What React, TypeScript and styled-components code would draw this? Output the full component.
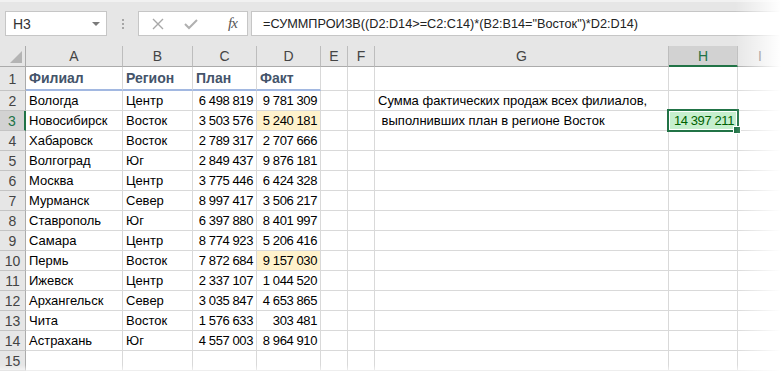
import React from "react";
import styled, { createGlobalStyle, css } from "styled-components";

const GlobalStyle = createGlobalStyle`
  html, body {
    margin: 0;
    padding: 0;
    background: #ffffff;
  }
  * {
    box-sizing: border-box;
  }
`;

const FONT = `"Liberation Sans", Arial, sans-serif`;
const GREEN = "#217346";

const Page = styled.div`
  position: relative;
  width: 783px;
  height: 379px;
  overflow: hidden;
  font-family: ${FONT};
  background: #ffffff;
`;

const FormulaBar = styled.div`
  display: flex;
  align-items: flex-start;
  height: 46px;
  padding: 11px 0 0 5px;
  background: #e6e6e6;
  border-top: 2px solid #f1f1f1;
`;

const NameBox = styled.div`
  display: flex;
  align-items: center;
  justify-content: space-between;
  width: 102px;
  height: 25px;
  margin-top: -2px;
  padding: 0 6px 0 7px;
  background: #ffffff;
  border: 1px solid #c6c6c6;
  font-size: 14px;
  color: #333333;
`;

const DropArrow = styled.span`
  width: 0;
  height: 0;
  border-left: 4px solid transparent;
  border-right: 4px solid transparent;
  border-top: 4px solid #7a7a7a;
`;

const Grip = styled.div`
  display: flex;
  flex-direction: column;
  gap: 2px;
  width: 31px;
  height: 25px;
  margin-top: -2px;
  align-items: center;
  justify-content: center;
  span {
    width: 2px;
    height: 2px;
    background: #a6a6a6;
  }
`;

const ButtonBox = styled.div`
  display: flex;
  align-items: center;
  width: 110px;
  height: 25px;
  margin-top: -2px;
  padding: 0 0 0 13px;
  background: #ffffff;
  border: 1px solid #c6c6c6;
  gap: 20px;
`;

const Fx = styled.span`
  margin-left: 10px;
  font-family: "Liberation Serif", "Times New Roman", serif;
  font-style: italic;
  font-size: 15px;
  color: #555555;
  letter-spacing: -1px;
`;

const FormulaInput = styled.div`
  flex: 1;
  height: 25px;
  margin-top: -2px;
  margin-left: 3px;
  padding: 0 0 0 11px;
  display: flex;
  align-items: center;
  background: #ffffff;
  border: 1px solid #c6c6c6;
  border-right: none;
  font-size: 12.7px;
  color: #222222;
  white-space: nowrap;
`;

const Sheet = styled.div`
  display: grid;
  grid-template-columns: 26px 97px 70px 64px 64px 27px 27px 294px 69px 1fr;
  grid-template-rows: 21px 24px repeat(14, 20px);
  font-size: 13px;
`;

const Corner = styled.div`
  position: relative;
  background: #e6e6e6;
  border-right: 1px solid #ababab;
  border-bottom: 1px solid #ababab;
  &::after {
    content: "";
    position: absolute;
    right: 3px;
    bottom: 3px;
    width: 0;
    height: 0;
    border-left: 12px solid transparent;
    border-bottom: 12px solid #b4b4b4;
  }
`;

const ColHead = styled.div<{ $active?: boolean }>`
  display: flex;
  align-items: center;
  justify-content: center;
  background: ${(p) => (p.$active ? "#d2d2d2" : "#e6e6e6")};
  color: ${(p) => (p.$active ? GREEN : "#444444")};
  border-right: 1px solid #bdbdbd;
  border-bottom: ${(p) => (p.$active ? `2px solid ${GREEN}` : "1px solid #ababab")};
  font-size: 14px;
`;

const RowHead = styled.div<{ $active?: boolean }>`
  display: flex;
  align-items: center;
  justify-content: center;
  background: ${(p) => (p.$active ? "#d2d2d2" : "#e6e6e6")};
  color: ${(p) => (p.$active ? GREEN : "#444444")};
  border-right: ${(p) => (p.$active ? `2px solid ${GREEN}` : "1px solid #ababab")};
  border-bottom: 1px solid #c4c4c4;
  font-size: 14px;
`;

const Cell = styled.div<{
  $num?: boolean;
  $fill?: string;
  $title?: boolean;
}>`
  display: flex;
  align-items: flex-end;
  justify-content: ${(p) => (p.$num ? "flex-end" : "flex-start")};
  padding: 0 3px 2px 3px;
  white-space: nowrap;
  color: #000000;
  background: ${(p) => p.$fill || "transparent"};
  border-right: 1px solid #d9d9d9;
  border-bottom: 1px solid #d9d9d9;
  ${(p) =>
    p.$num &&
    css`
      letter-spacing: -0.4px;
    `}
  ${(p) =>
    p.$title &&
    css`
      font-weight: bold;
      font-size: 14px;
      color: #44546a;
      padding-bottom: 3px;
      border-bottom: 2px solid #a2b8e1;
    `}
`;

const SelectedCell = styled(Cell)`
  position: relative;
  background: #c6efce;
  color: #006100;
  &::before {
    content: "";
    position: absolute;
    left: -2px;
    top: -2px;
    right: -2px;
    bottom: -2px;
    border: 2px solid ${GREEN};
    box-shadow: inset 0 0 0 1px #ffffff;
  }
  &::after {
    content: "";
    position: absolute;
    right: -4px;
    bottom: -4px;
    width: 6px;
    height: 6px;
    background: ${GREEN};
    border: 1px solid #ffffff;
  }
`;

const FadeRight = styled.div`
  position: absolute;
  top: 0;
  right: 0;
  width: 48px;
  height: 100%;
  background: linear-gradient(to right, rgba(255, 255, 255, 0), #ffffff 95%);
  pointer-events: none;
`;

const FadeBottom = styled.div`
  position: absolute;
  left: 0;
  bottom: 0;
  width: 100%;
  height: 14px;
  background: linear-gradient(to bottom, rgba(255, 255, 255, 0), #ffffff 70%);
  pointer-events: none;
`;

type Row = [string, string, string, string];

const rows: Row[] = [
  ["Вологда", "Центр", "6 498 819", "9 781 309"],
  ["Новосибирск", "Восток", "3 503 576", "5 240 181"],
  ["Хабаровск", "Восток", "2 789 317", "2 707 666"],
  ["Волгоград", "Юг", "2 849 437", "9 876 181"],
  ["Москва", "Центр", "3 775 446", "6 424 328"],
  ["Мурманск", "Север", "8 997 417", "3 506 217"],
  ["Ставрополь", "Юг", "6 397 880", "8 401 997"],
  ["Самара", "Центр", "8 774 923", "5 206 416"],
  ["Пермь", "Восток", "7 872 684", "9 157 030"],
  ["Ижевск", "Центр", "2 337 107", "1 044 520"],
  ["Архангельск", "Север", "3 035 847", "4 653 865"],
  ["Чита", "Восток", "1 576 633", "303 481"],
  ["Астрахань", "Юг", "4 557 003", "8 964 910"],
];

const columns = ["A", "B", "C", "D", "E", "F", "G", "H", "I"];

const XIcon = () => (
  <svg width="12" height="12" viewBox="0 0 12 12">
    <path d="M1 1 L11 11 M11 1 L1 11" stroke="#a8a8a8" strokeWidth="1.4" fill="none" />
  </svg>
);

const CheckIcon = () => (
  <svg width="14" height="12" viewBox="0 0 14 12">
    <path d="M1 6 L5 10 L13 2" stroke="#b0b0b0" strokeWidth="2" fill="none" />
  </svg>
);

const App = () => {
  const gText = (r: number) => {
    if (r === 2) return "Сумма фактических продаж всех филиалов,";
    if (r === 3) return "\u00a0выполнивших план в регионе Восток";
    return "";
  };

  return (
    <>
      <GlobalStyle />
      <Page>
        <FormulaBar>
          <NameBox>
            H3
            <DropArrow />
          </NameBox>
          <Grip>
            <span />
            <span />
            <span />
          </Grip>
          <ButtonBox>
            <XIcon />
            <CheckIcon />
            <Fx>fx</Fx>
          </ButtonBox>
          <FormulaInput>=СУММПРОИЗВ((D2:D14&gt;=C2:C14)*(B2:B14="Восток")*D2:D14)</FormulaInput>
        </FormulaBar>

        <Sheet>
          <Corner />
          {columns.map((c) => (
            <ColHead key={c} $active={c === "H"}>
              {c}
            </ColHead>
          ))}

          <RowHead>1</RowHead>
          <Cell $title>Филиал</Cell>
          <Cell $title>Регион</Cell>
          <Cell $title>План</Cell>
          <Cell $title>Факт</Cell>
          <Cell />
          <Cell />
          <Cell />
          <Cell />
          <Cell />

          {rows.map((row, i) => {
            const r = i + 2;
            const highlight = r === 3 || r === 10;
            return (
              <React.Fragment key={r}>
                <RowHead $active={r === 3}>{r}</RowHead>
                <Cell>{row[0]}</Cell>
                <Cell>{row[1]}</Cell>
                <Cell $num>{row[2]}</Cell>
                <Cell $num $fill={highlight ? "#fff2cc" : undefined}>
                  {row[3]}
                </Cell>
                <Cell />
                <Cell />
                <Cell>{gText(r)}</Cell>
                {r === 3 ? <SelectedCell $num>14 397 211</SelectedCell> : <Cell />}
                <Cell />
              </React.Fragment>
            );
          })}

          <RowHead>15</RowHead>
          {columns.map((c) => (
            <Cell key={c} />
          ))}
        </Sheet>

        <FadeRight />
        <FadeBottom />
      </Page>
    </>
  );
};

export default App;
